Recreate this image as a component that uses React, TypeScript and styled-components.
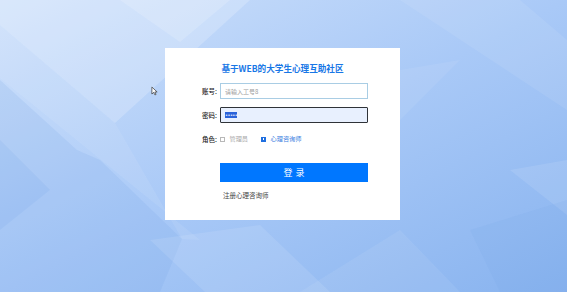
import React from "react";
import styled, { createGlobalStyle } from "styled-components";

const GlobalStyle = createGlobalStyle`
  html, body {
    margin: 0;
    padding: 0;
    width: 100%;
    height: 100%;
    overflow: hidden;
  }
  body {
    font-family: "Noto Sans CJK SC", "Noto Sans", sans-serif;
  }
  #root {
    height: 100%;
  }
`;

const Backdrop = () => (
  <BackdropSvg viewBox="0 0 567 292" preserveAspectRatio="none">
    <defs>
      <linearGradient id="base" x1="0" y1="0" x2="1" y2="1">
        <stop offset="0" stopColor="#d0e2fb" />
        <stop offset="0.5" stopColor="#a9c9f7" />
        <stop offset="1" stopColor="#88b3ef" />
      </linearGradient>
    </defs>
    <rect width="567" height="292" fill="url(#base)" />
    {/* bright V from the top left */}
    <polygon points="0,0 0,25 115,123 250,0" fill="#ffffff" opacity="0.2" />
    <polygon points="120,0 180,42 230,0" fill="#ffffff" opacity="0.16" />
    {/* band running down to the card corner */}
    <polygon points="0,78 0,25 115,123 182,239 200,240" fill="#ffffff" opacity="0.08" />
    <polygon points="0,80 77,150 100,160 182,239 160,292 0,292" fill="#6a9ee6" opacity="0.14" />
    <polygon points="0,140 50,190 0,230" fill="#5d92e0" opacity="0.1" />
    {/* lower middle lighter diamond */}
    <polygon points="150,240 205,292 330,292 260,225" fill="#ffffff" opacity="0.1" />
    <polygon points="300,292 400,230 460,292" fill="#ffffff" opacity="0.07" />
    {/* right side facets */}
    <polygon points="400,0 520,0 567,40 567,110" fill="#ffffff" opacity="0.08" />
    <polygon points="400,70 460,60 400,120" fill="#ffffff" opacity="0.07" />
    <polygon points="510,170 567,160 567,215" fill="#ffffff" opacity="0.1" />
    <polygon points="470,230 567,200 567,292 500,292" fill="#6a9ee6" opacity="0.1" />
  </BackdropSvg>
);

const Cursor = () => (
  <CursorSvg viewBox="0 0 8 11" width="7" height="10">
    <path d="M1 1 L1 9 L3 7 L4.5 10 L5.8 9.4 L4.4 6.6 L7 6.6 Z" fill="#ffffff" stroke="#333" strokeWidth="0.8" strokeLinejoin="round" />
  </CursorSvg>
);

export default function App() {
  return (
    <Page>
      <GlobalStyle />
      <Backdrop />
      <Cursor />
      <Card>
        <Title>基于WEB的大学生心理互助社区</Title>
        <Form>
          <Label>账号:</Label>
          <TextInput placeholder="请输入工号8" />
          <Label>密码:</Label>
          <PasswordBox>
            <Selection>•••••</Selection>
          </PasswordBox>
          <Label>角色:</Label>
          <Roles>
            <Role>
              <Box />
              <RoleText>管理员</RoleText>
            </Role>
            <Role>
              <Box $checked />
              <RoleText $checked>心理咨询师</RoleText>
            </Role>
          </Roles>
          <span />
          <LoginButton>登录</LoginButton>
          <span />
          <Register>注册心理咨询师</Register>
        </Form>
      </Card>
    </Page>
  );
}

const Page = styled.div`
  position: relative;
  width: 567px;
  height: 292px;
  overflow: hidden;
  padding-top: 48px;
  box-sizing: border-box;
`;

const BackdropSvg = styled.svg`
  position: absolute;
  inset: 0;
  width: 567px;
  height: 292px;
  z-index: 0;
`;

const CursorSvg = styled.svg`
  position: absolute;
  left: 151px;
  top: 86px;
  z-index: 1;
`;

const Card = styled.div`
  position: relative;
  z-index: 1;
  width: 235px;
  height: 172px;
  margin-left: 165px;
  background: #ffffff;
  box-sizing: border-box;
  padding-top: 13px;
`;

const Title = styled.div`
  text-align: center;
  color: #1877e6;
  font-size: 8.6px;
  line-height: 14px;
  font-weight: 700;
`;

const Form = styled.div`
  display: grid;
  grid-template-columns: 52px 148px;
  column-gap: 3px;
  row-gap: 8px;
  margin-top: 8px;
  align-items: center;
`;

const Label = styled.div`
  text-align: right;
  font-size: 6.5px;
  line-height: 16px;
  font-weight: 500;
  color: #222;
`;

const TextInput = styled.input`
  box-sizing: border-box;
  width: 148px;
  height: 16px;
  border: 1px solid #a9cde4;
  border-radius: 0;
  padding: 0 0 0 4px;
  font-family: inherit;
  font-size: 6px;
  outline: none;
  &::placeholder {
    color: #9a9a9a;
  }
`;

const PasswordBox = styled.div`
  box-sizing: border-box;
  width: 148px;
  height: 16px;
  border: 1px solid #2f3338;
  border-radius: 1px;
  background: #e8f0fe;
  padding-left: 4px;
  display: flex;
  align-items: center;
`;

const Selection = styled.span`
  background: #2b63d9;
  color: #ffffff;
  font-size: 5px;
  line-height: 6px;
  letter-spacing: -0.5px;
  font-family: "DejaVu Sans", sans-serif;
`;

const Roles = styled.div`
  display: flex;
  align-items: center;
  gap: 13px;
  height: 16px;
`;

const Role = styled.label`
  display: flex;
  align-items: center;
  gap: 4.5px;
`;

const Box = styled.span<{ $checked?: boolean }>`
  box-sizing: border-box;
  width: 5px;
  height: 5px;
  border: 0.6px solid ${(p) => (p.$checked ? "#1f6fe0" : "#b8b8b8")};
  background: ${(p) => (p.$checked ? "#1f6fe0" : "#ffffff")};
  display: flex;
  align-items: center;
  justify-content: center;
  &::after {
    content: "";
    display: ${(p) => (p.$checked ? "block" : "none")};
    width: 1.5px;
    height: 1.5px;
    background: #ffffff;
  }
`;

const RoleText = styled.span<{ $checked?: boolean }>`
  font-size: 6.2px;
  line-height: 8px;
  color: ${(p) => (p.$checked ? "#3b7ee0" : "#a8a8a8")};
`;

const LoginButton = styled.button`
  box-sizing: border-box;
  width: 148px;
  height: 19px;
  margin-top: 8px;
  border: none;
  background: #0077ff;
  color: #ffffff;
  font-family: inherit;
  font-size: 9px;
  letter-spacing: 3px;
  padding: 0 0 0 3px;
`;

const Register = styled.div`
  font-size: 6.5px;
  line-height: 10px;
  color: #444;
  padding-left: 3px;
`;
